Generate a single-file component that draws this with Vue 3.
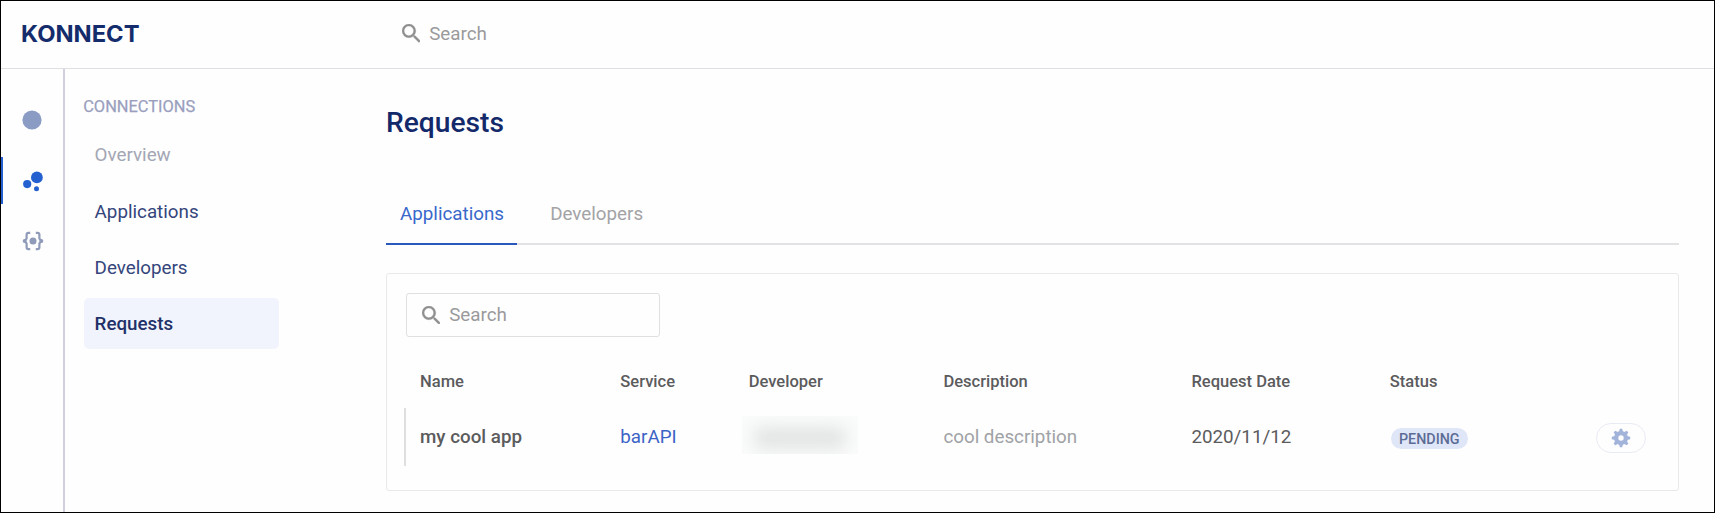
<script setup>
const nav = [
  { label: 'Overview', kind: 'muted' },
  { label: 'Applications', kind: '' },
  { label: 'Developers', kind: '' },
  { label: 'Requests', kind: 'active' },
]
const columns = ['Name', 'Service', 'Developer', 'Description', 'Request Date', 'Status', '']
</script>

<template>
  <div class="app">
    <header class="topbar">
      <svg class="logo" width="122" height="36" viewBox="0 0 122 36">
        <text y="25.5" x="0" textLength="118.5" lengthAdjust="spacingAndGlyphs">KONNECT</text>
      </svg>
      <div class="search">
        <svg class="lens" viewBox="3 3 17.5 17.5"><path d="M15.5 14h-.79l-.28-.27A6.47 6.47 0 0 0 16 9.5 6.5 6.5 0 1 0 9.5 16c1.61 0 3.09-.59 4.23-1.57l.27.28v.79l5 4.99L20.49 19l-4.99-5zm-6 0a4.5 4.5 0 1 1 0-9 4.5 4.5 0 0 1 0 9z" /></svg>
        <span>Search</span>
      </div>
    </header>
    <div class="body">
      <aside class="rail">
        <div class="rail-item"><svg width="20" height="20"><circle cx="10" cy="10" r="9.6" fill="#8b9cc4" /></svg></div>
        <div class="rail-item on">
          <svg width="22" height="22"><g fill="#2460d0"><circle cx="14.9" cy="7.4" r="5.9" /><circle cx="5.2" cy="14.1" r="4.1" /><circle cx="14.5" cy="18.7" r="2.5" /></g></svg>
        </div>
        <div class="rail-item">
          <svg width="22" height="20" fill="none" stroke="#8f9bb8" stroke-width="2.2"><path d="M8.2 1.9H6.4Q4.6 1.9 4.6 3.8V7.4L3 10L4.6 12.6V16.2Q4.6 18.1 6.4 18.1H8.2M13.8 1.9H15.6Q17.4 1.9 17.4 3.8V7.4L19 10L17.4 12.6V16.2Q17.4 18.1 15.6 18.1H13.8" /><g fill="#8f9bb8" stroke="none"><circle cx="11" cy="10" r="3.5" /><circle cx="2.6" cy="10" r="1.9" /><circle cx="19.4" cy="10" r="1.9" /></g></svg>
        </div>
      </aside>
      <nav class="menu">
        <h2>CONNECTIONS</h2>
        <a v-for="n in nav" :key="n.label" :class="n.kind">{{ n.label }}</a>
      </nav>
      <main class="content">
        <h1>Requests</h1>
        <div class="tabs">
          <span class="tab current">Applications</span>
          <span class="tab">Developers</span>
        </div>
        <section class="card">
          <div class="search field">
            <svg class="lens" viewBox="3 3 17.5 17.5"><path d="M15.5 14h-.79l-.28-.27A6.47 6.47 0 0 0 16 9.5 6.5 6.5 0 1 0 9.5 16c1.61 0 3.09-.59 4.23-1.57l.27.28v.79l5 4.99L20.49 19l-4.99-5zm-6 0a4.5 4.5 0 1 1 0-9 4.5 4.5 0 0 1 0 9z" /></svg>
            <span>Search</span>
          </div>
          <div class="row head"><span v-for="c in columns" :key="c">{{ c }}</span></div>
          <div class="row item">
            <span class="name">my cool app</span>
            <span class="link">barAPI</span>
            <span class="redacted"><i></i></span>
            <span class="desc">cool description</span>
            <span>2020/11/12</span>
            <span class="status"><b class="badge">PENDING</b></span>
            <span class="gear">
              <svg width="20" height="20" viewBox="-10 -10 20 20">
                <g fill="#a3b4db">
                  <path fill-rule="evenodd" d="M0-7A7 7 0 1 1 0 7A7 7 0 1 1 0-7ZM0-2.7A2.7 2.7 0 1 0 0 2.7A2.7 2.7 0 1 0 0-2.7Z" />
                  <path v-for="a in 8" :key="a" :transform="`rotate(${a * 45})`" d="M-2-6L-1.2-9.2H1.2L2-6Z" />
                </g>
              </svg>
            </span>
          </div>
        </section>
      </main>
    </div>
  </div>
</template>

<style>
body { margin: 0; }
</style>
<style scoped>
* { box-sizing: border-box; }
.app { width: 1715px; height: 513px; border: 1px solid #000; background: #fefefe; font-family: Roboto, sans-serif; font-size: 18.8px; color: #5b5b5d; display: flex; flex-direction: column; overflow: hidden; white-space: nowrap; }
.topbar { height: 68px; flex: none; border-bottom: 1px solid #e0e0e4; display: flex; align-items: center; padding: 0 0 2px 20px; }
.logo { flex: none; margin-right: 258.5px; overflow: visible; }
.logo text { font-family: Inter, sans-serif; font-weight: 700; font-size: 23.4px; fill: #142c6c; }
.search { display: flex; align-items: center; gap: 9.2px; color: #9a9a9c; }
.lens { width: 18.5px; height: 18.5px; fill: #8f8f91; stroke: #8f8f91; stroke-width: .3; }
.body { flex: 1; display: flex; min-height: 0; }
.rail { width: 64px; flex: none; border-right: 2px solid #d0d1dc; padding-top: 27px; display: flex; flex-direction: column; gap: 14px; }
.rail-item { height: 47px; display: flex; align-items: center; padding-left: 20.8px; border-left: 0 solid #2460d0; }
.rail-item:last-child { margin-top: -1px; }
.rail-item.on { border-left-width: 2px; padding-left: 18.8px; }
.menu { width: 195px; flex: none; margin-left: 19px; padding-top: 28px; display: flex; flex-direction: column; }
.menu h2 { margin: 0 0 12.8px -.8px; font-size: 16.4px; line-height: 20px; font-weight: 400; color: #9a9fbe; -webkit-text-stroke: .25px #9a9fbe; }
.menu a { height: 51px; line-height: 52px; padding-left: 10.6px; margin-bottom: 5.2px; border-radius: 5px; color: #34457c; }
.menu a.muted { color: #a3a6b4; line-height: 51px; }
.menu a.active { background: #f1f4fd; color: #1f3168; font-weight: 500; }
.content { margin-left: 107px; width: 1293px; padding-top: 34px; }
h1 { margin: 0; font-size: 28.2px; line-height: 40px; font-weight: 500; color: #14296a; }
.tabs { display: flex; height: 60px; margin-top: 42px; border-bottom: 2px solid #e2e2e5; }
.tab { line-height: 58px; height: 60px; padding: 0 14px; color: #a3a3a6; margin-right: 19.2px; }
.current { width: 131px; color: #3968cc; border-bottom: 2px solid #2a59bd; }
.card { margin-top: 28px; height: 218px; border: 1px solid #e9e9eb; border-radius: 3px; padding: 19px 0 0 19px; }
.field { width: 254px; height: 44px; border: 1px solid #e0e0e3; border-radius: 3px; padding-left: 14.5px; }
.row { display: grid; grid-template-columns: 200.3px 128.4px 194.7px 248px 198.4px 206.5px 50px; align-items: center; padding-left: 14px; }
.head { margin-top: 30px; height: 28px; font-size: 16.55px; font-weight: 500; }
.item { height: 58px; margin-top: 13px; margin-left: -2px; border-left: 2px solid #dfdfe1; padding-left: 14px; }
.name { font-weight: 500; }
.link { color: #3c63c6; }
.desc { color: #a0a2a6; }
.redacted { height: 38px; width: 116px; margin-left: -7px; margin-top: -5px; display: flex; align-items: center; justify-content: center; overflow: hidden; background: #fafbfb; }
.redacted i { width: 92px; height: 22px; margin-top: 6px; background: #e3e4e4; border-radius: 8px; filter: blur(8px); }
.status { display: flex; padding: 3px 0 0 1px; }
.badge { width: 77px; height: 21px; line-height: 22px; border-radius: 11px; background: #dfe6f8; color: #5c6c95; font-size: 14.3px; font-weight: 500; text-align: center; }
.gear { width: 50px; height: 30px; margin-top: 1px; border: 1px solid #e9ebf4; border-radius: 15px; display: flex; align-items: center; justify-content: center; }
</style>
